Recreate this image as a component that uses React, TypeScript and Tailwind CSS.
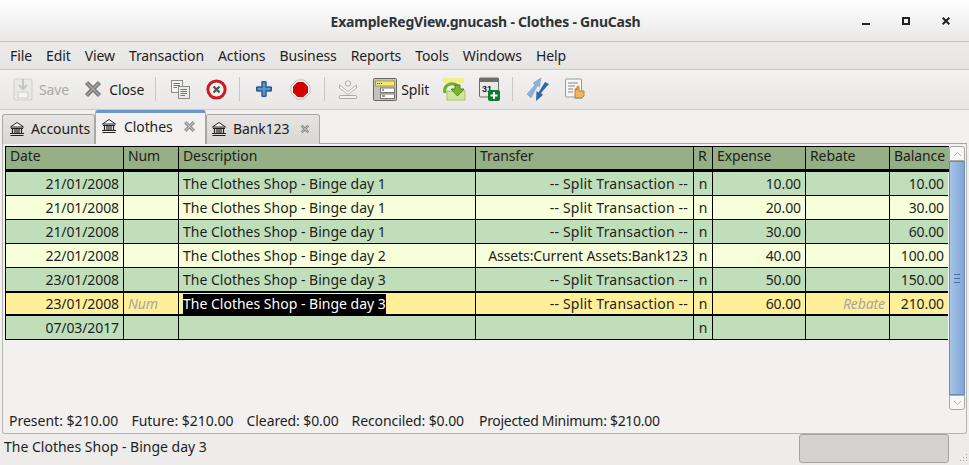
import React from "react";

const COLS = "grid grid-cols-[118px_55px_297px_218px_19px_93px_84px_59px]";

type R = { d: string; ds: string; t: string; r: string; e: string; b: string };
const SPLIT = "-- Split Transaction --";
const rows: R[] = [
  { d: "21/01/2008", ds: "The Clothes Shop - Binge day 1", t: SPLIT, r: "n", e: "10.00", b: "10.00" },
  { d: "21/01/2008", ds: "The Clothes Shop - Binge day 1", t: SPLIT, r: "n", e: "20.00", b: "30.00" },
  { d: "21/01/2008", ds: "The Clothes Shop - Binge day 1", t: SPLIT, r: "n", e: "30.00", b: "60.00" },
  { d: "22/01/2008", ds: "The Clothes Shop - Binge day 2", t: "Assets:Current Assets:Bank123", r: "n", e: "40.00", b: "100.00" },
  { d: "23/01/2008", ds: "The Clothes Shop - Binge day 3", t: SPLIT, r: "n", e: "50.00", b: "150.00" },
];

function Bank({ size = 16 }: { size?: number }) {
  return (
    <svg width={size} height={size} viewBox="0 0 16 16" fill="none" stroke="#222" strokeWidth="1">
      <path d="M8 1.5 L14.5 6 H1.5 Z" fill="#fff" />
      <path d="M2 7.5H14M1.5 14.5H14.5M1 12.5H15" />
      <path d="M3.5 8V12M6 8V12M8 8V12M10 8V12M12.5 8V12" strokeWidth="1.2" />
    </svg>
  );
}

function TabClose({ size = 13, c = "#8a8a86" }: { size?: number; c?: string }) {
  return (
    <svg width={size} height={size} viewBox="0 0 12 12">
      <path d="M2 2 L10 10 M10 2 L2 10" stroke={c} strokeWidth="3" />
      <path d="M2 2 L10 10 M10 2 L2 10" stroke="#c4c4c0" strokeWidth="1" />
    </svg>
  );
}

function Sep({ ml }: { ml: string }) {
  return <div className={`w-px h-[24px] bg-[#c9c8c5] ${ml}`} />;
}

function Cell({ children, right, border = true, className = "" }: { children?: React.ReactNode; right?: boolean; border?: boolean; className?: string }) {
  return (
    <div className={`h-full flex items-center pl-[4px] overflow-hidden whitespace-nowrap ${right ? "justify-end" : ""} ${border ? "border-r border-black pr-[4px]" : "pr-[4px]"} ${className}`}>
      {children}
    </div>
  );
}

function transferClass(t: string) {
  return t === SPLIT ? "tracking-[0.2px] pr-[5px]" : "pr-[5px]";
}

function DataRow({ r, bg }: { r: R; bg: string }) {
  return (
    <div className={`${COLS} h-[24px] border-b border-black ${bg}`}>
      <Cell right>{r.d}</Cell>
      <Cell />
      <Cell className="tracking-normal">{r.ds}</Cell>
      <Cell right className={transferClass(r.t)}>{r.t}</Cell>
      <Cell className="justify-center">{r.r}</Cell>
      <Cell right>{r.e}</Cell>
      <Cell />
      <Cell right border={false} className="pr-[5px]">{r.b}</Cell>
    </div>
  );
}

export default function App() {
  return (
    <div className="w-[969px] h-[465px] overflow-hidden flex flex-col bg-[#f2f1f0] text-[14px] text-[#1e1e1e] font-['Noto_Sans',sans-serif] tracking-[-0.1px]">
      {/* title */}
      <div className="h-[42px] shrink-0 flex items-center relative border-b border-[#c6c5c3] bg-gradient-to-b from-[#ffffff] to-[#e9e8e7]">
        <div className="w-full text-center font-bold text-[#2e3436] text-[14px] pl-[2px] pt-[1px] tracking-[-0.22px]">ExampleRegView.gnucash - Clothes - GnuCash</div>
        <div className="absolute left-[862px] top-[17px] flex items-start gap-[32px]">
          <div className="w-[8px] h-[2px] bg-[#222] mt-[6px]" />
          <div className="w-[8px] h-[8px] border-2 border-[#222]" />
          <svg width="8" height="8" viewBox="0 0 8 8"><path d="M0.7 0.7L7.3 7.3M7.3 0.7L0.7 7.3" stroke="#222" strokeWidth="2" /></svg>
        </div>
      </div>
      {/* menu */}
      <div className="h-[28px] shrink-0 flex items-center pl-[10px] gap-[14px] border-b border-[#c9c8c6] bg-gradient-to-b from-[#ecebea] to-[#e6e5e3]">
        {["File", "Edit", "View", "Transaction", "Actions", "Business", "Reports", "Tools", "Windows", "Help"].map((m) => (
          <span key={m}>{m}</span>
        ))}
      </div>
      {/* toolbar */}
      <div className="h-[40px] shrink-0 flex items-center pb-[2px] border-b border-[#c9c8c6] border-t border-t-[#f7f7f6] bg-gradient-to-b from-[#f2f1f0] to-[#e8e7e5] pl-[13px]">
        <svg width="20" height="24" viewBox="0 0 20 24" fill="none" stroke="#d2d2ce" strokeWidth="1.2">
          <rect x="1" y="2" width="18" height="21" rx="2" fill="#e9e9e6" />
          <path d="M10 2V11M6 8L10 12L14 8" stroke="#c6c6c2" strokeWidth="2" />
          <rect x="5" y="15" width="10" height="6" fill="#f4f4f2" />
        </svg>
        <span className="ml-[6px] text-[#a9a9a6]">Save</span>
        <svg className="ml-[15px]" width="18" height="18" viewBox="0 0 18 18"><path d="M2.5 2.5L15.5 15.5M15.5 2.5L2.5 15.5" stroke="#7a7a76" strokeWidth="4.5" /><path d="M3 3L15 15M15 3L3 15" stroke="#a5a5a1" strokeWidth="1.5" /></svg>
        <span className="ml-[7px]">Close</span>
        <Sep ml="ml-[11px]" />
        <svg className="ml-[14px]" width="20" height="20" viewBox="0 0 20 20" fill="#f6f6f5" stroke="#8b8b88">
          <rect x="1.5" y="1.5" width="11" height="12" />
          <rect x="8.5" y="7.5" width="11" height="12" fill="#e9e9e7" />
          <path d="M3.5 4.5H10M3.5 6.5H10M3.5 8.5H7M10.5 10.5H17M10.5 12.5H17M10.5 14.5H17M10.5 16.5H15" stroke="#777" />
        </svg>
        <svg className="ml-[16px]" width="21" height="21" viewBox="0 0 21 21">
          <circle cx="10.5" cy="10.5" r="8.6" fill="#f4f4f3" stroke="#cc1b26" strokeWidth="3" />
          <path d="M7.5 7.5L13.5 13.5M13.5 7.5L7.5 13.5" stroke="#555" strokeWidth="2.4" />
        </svg>
        <Sep ml="ml-[12px]" />
        <svg className="ml-[16px]" width="16" height="16" viewBox="0 0 16 16">
          <path d="M8 2V14M2 8H14" stroke="#28588f" strokeWidth="5.4" strokeLinecap="round" />
          <path d="M8 2.5V13.5M2.5 8H13.5" stroke="#5f93cc" strokeWidth="2.6" strokeLinecap="round" />
        </svg>
        <svg className="ml-[18px]" width="21" height="21" viewBox="0 0 21 21">
          <path d="M7 1H14L20 7V14L14 20H7L1 14V7Z" fill="#f4f4f2" stroke="#bdbdb9" />
          <path d="M7.5 3H13.5L18 7.5V13.5L13.5 18H7.5L3 13.5V7.5Z" fill="#d40000" />
        </svg>
        <Sep ml="ml-[13px]" />
        <svg className="ml-[13px]" width="20" height="20" viewBox="0 0 20 20" fill="none">
          <path d="M1.5 6L10 12.5L18.5 6V9L10 15.5L1.5 9Z" fill="#f7f7f6" stroke="#b5b5b1" />
          <circle cx="10" cy="4.5" r="2.5" fill="#f7f7f6" stroke="#b5b5b1" strokeWidth="1.2" />
          <rect x="1" y="16.5" width="18" height="3" rx="1.5" fill="#f0f0ee" stroke="#a8a8a4" />
        </svg>
        <svg className="ml-[15px]" width="24" height="23" viewBox="0 0 24 23">
          <rect x="0.5" y="0.5" width="23" height="22" rx="1" fill="#c3c2bf" stroke="#666" />
          <rect x="2.5" y="3" width="19" height="5" fill="#f5e77a" stroke="#a99b3c" />
          <path d="M4 5.5H9" stroke="#333" strokeDasharray="1 1" />
          <rect x="7.5" y="10" width="14" height="4.5" fill="#fff" stroke="#777" />
          <rect x="7.5" y="16" width="14" height="4.5" fill="#fff" stroke="#777" />
          <path d="M9 12H11M9 18H12" stroke="#333" />
        </svg>
        <span className="ml-[4px]">Split</span>
        <svg className="ml-[13px]" width="24" height="24" viewBox="0 0 24 24">
          <rect x="1" y="1" width="21" height="5" fill="#f3ee8a" />
          <rect x="5" y="14" width="18" height="9" fill="#cfe79a" stroke="#a9c278" />
          <path d="M3 16C1 8 10 4 16 9" fill="none" stroke="#6cae2d" strokeWidth="3" />
          <path d="M13 8H18V12H22L15.5 19L9 12H13Z" fill="#78b52c" stroke="#4e8a1b" />
        </svg>
        <svg className="ml-[13px]" width="21" height="24" viewBox="0 0 21 24">
          <rect x="0.5" y="1" width="19" height="19" rx="1" fill="#e8e8e6" stroke="#6d6d6a" />
          <rect x="0.5" y="1" width="19" height="4" fill="#6d6d6a" />
          <text x="3" y="14.5" fontSize="9" fontWeight="700" fill="#222" fontFamily="Liberation Sans, sans-serif">31</text>
          <rect x="9" y="13" width="12" height="11" rx="2" fill="#0d7a2c" />
          <path d="M15 15V22M11.5 18.5H18.5" stroke="#fff" strokeWidth="2" />
        </svg>
        <Sep ml="ml-[12px]" />
        <svg className="ml-[13px]" width="24" height="24" viewBox="0 0 24 24">
          <path d="M1 17L9 8L7 6L15 1L13.5 10L11.5 8.5L5 21Z" fill="#8db1dc" stroke="#7197c6" strokeWidth=".5" />
          <path d="M23 7L15 16L17 18L10 24L10.5 14L12.5 15.5L19 5Z" fill="#2f67a8" />
        </svg>
        <svg className="ml-[15px]" width="20" height="22" viewBox="0 0 20 22">
          <rect x="0.5" y="1" width="16" height="18" rx="1" fill="#f6f6f4" stroke="#9a9a96" />
          <path d="M3 5H13M3 8H10M3 11H8M3 14H8" stroke="#888" />
          <rect x="9" y="18" width="8" height="3" fill="#a9c4e4" />
          <path d="M10 19V12Q10 10.5 11 10.5Q12 10.5 12 12V9Q12 8 13 8Q14 8 14 9V13L19 13V18L17 20H11Z" fill="#f2b45c" stroke="#b86a12" strokeWidth=".8" />
        </svg>
      </div>
      {/* tabs */}
      <div className="h-[34px] shrink-0 flex items-end pl-[2px] relative z-10 -mb-[1px] text-[14px]">
        <div className="h-[30px] w-[93px] flex items-center pl-[6px] pb-[2px] gap-[6px] rounded-t-[3px] border border-b-0 border-[#a9a8a5] bg-gradient-to-b from-[#e6e5e3] to-[#d7d6d3]">
          <Bank />
          <span>Accounts</span>
        </div>
        <div className="h-[34px] w-[111px] flex items-center pl-[5px] pb-[5px] gap-[7px] rounded-t-[3px] border border-b-0 border-[#a9a8a5] border-t-[3px] border-t-[#6d97c8] bg-[#f2f1f0]">
          <Bank />
          <span>Clothes</span>
          <span className="ml-[3px] flex"><TabClose /></span>
        </div>
        <div className="h-[30px] w-[114px] flex items-center pl-[4px] pb-[2px] gap-[6px] rounded-t-[3px] border border-b-0 border-[#a9a8a5] bg-gradient-to-b from-[#e6e5e3] to-[#d7d6d3]">
          <Bank />
          <span>Bank123</span>
          <span className="ml-[5px] flex"><TabClose size={10} /></span>
        </div>
      </div>
      {/* notebook */}
      <div className="h-[291px] shrink-0 mx-[2px] border border-t-[#a9a8a5] border-[#b5b4b1] rounded-b-[3px] bg-[#f2f1f0] flex flex-col">
        <div className="flex pl-[2px] pt-[2px] h-[266px] shrink-0">
          <div className="w-[943px] shrink-0 self-start border-l border-black">
            <div className={`${COLS} h-[26px] bg-[#96af84] border-t border-black border-b-[3px] -mr-px`}>
              {["Date", "Num", "Description", "Transfer", "R", "Expense", "Rebate", "Balance"].map((h, i) => (
                <Cell key={h} border={i < 7} className="pb-[5px]">{h}</Cell>
              ))}
            </div>
            <DataRow r={rows[0]} bg="bg-[#bfdeb9]" />
            <DataRow r={rows[1]} bg="bg-[#f6ffda]" />
            <DataRow r={rows[2]} bg="bg-[#bfdeb9]" />
            <DataRow r={rows[3]} bg="bg-[#f6ffda]" />
            <DataRow r={rows[4]} bg="bg-[#bfdeb9]" />
            <div className={`${COLS} h-[25px] -mt-[1px] border-y-2 border-black bg-[#ffef98]`}>
              <Cell right>23/01/2008</Cell>
              <Cell className="italic text-[#a8a8a0]">Num</Cell>
              <Cell className="tracking-normal"><span className="bg-black text-white leading-[20px]">The Clothes Shop - Binge day 3</span></Cell>
              <Cell right className="tracking-[0.2px] pr-[5px]">{SPLIT}</Cell>
              <Cell className="justify-center">n</Cell>
              <Cell right>60.00</Cell>
              <Cell right className="italic text-[#a8a8a0]">Rebate</Cell>
              <Cell right border={false} className="pr-[5px]">210.00</Cell>
            </div>
            <div className={`${COLS} h-[24px] border-b border-black bg-[#bfdeb9]`}>
              <Cell right>07/03/2017</Cell>
              <Cell />
              <Cell />
              <Cell />
              <Cell className="justify-center">n</Cell>
              <Cell />
              <Cell />
              <Cell border={false} />
            </div>
          </div>
          {/* scrollbar */}
          <div className="w-[16px] h-[264px] shrink-0 ml-[1px] flex flex-col">
            <div className="h-[15px] shrink-0 flex items-center justify-center rounded-t-[3px] border border-[#a9a8a5] bg-[#f7f7f6]">
              <svg width="9" height="6" viewBox="0 0 9 6" fill="none"><path d="M1 5L4.5 1.5L8 5" stroke="#b4b4b0" /></svg>
            </div>
            <div className="flex-1 flex items-center justify-center border border-[#6d8db5] bg-gradient-to-r from-[#a9c5e6] to-[#7fa5d6]">
              <div className="w-[6px] h-[9px] border-y border-[#4f6f98] flex items-center"><div className="w-full h-px bg-[#4f6f98]" /></div>
            </div>
            <div className="h-[15px] shrink-0 flex items-center justify-center rounded-b-[3px] border border-[#a9a8a5] bg-[#f7f7f6]">
              <svg width="9" height="6" viewBox="0 0 9 6" fill="none"><path d="M1 1L4.5 4.5L8 1" stroke="#b4b4b0" /></svg>
            </div>
          </div>
        </div>
        <div className="flex pl-[6px] gap-[13px] h-[20px] items-center">
          <span className="tracking-[0px]">Present: $210.00</span>
          <span className="tracking-[0px]">Future: $210.00</span>
          <span>Cleared: $0.00</span>
          <span>Reconciled: $0.00</span>
          <span className="tracking-[-0.3px] ml-[2px]">Projected Minimum: $210.00</span>
        </div>
      </div>
      {/* status */}
      <div className="flex-1 flex items-start bg-[#edecea] relative">
        <span className="pl-[4px] pt-[2px] tracking-normal">The Clothes Shop - Binge day 3</span>
        <div className="absolute left-[799px] top-0 w-[150px] h-[29px] rounded-[3px] border border-[#a3a3a0] bg-[#d3d2cf]" />
        <svg className="absolute right-[1px] bottom-[2px]" width="10" height="10" viewBox="0 0 10 10" fill="#a9a8a5">
          <rect x="8" y="1" width="1" height="1" /><rect x="5" y="4" width="1" height="1" /><rect x="8" y="4" width="1" height="1" /><rect x="2" y="7" width="1" height="1" /><rect x="5" y="7" width="1" height="1" /><rect x="8" y="7" width="1" height="1" />
        </svg>
      </div>
    </div>
  );
}
